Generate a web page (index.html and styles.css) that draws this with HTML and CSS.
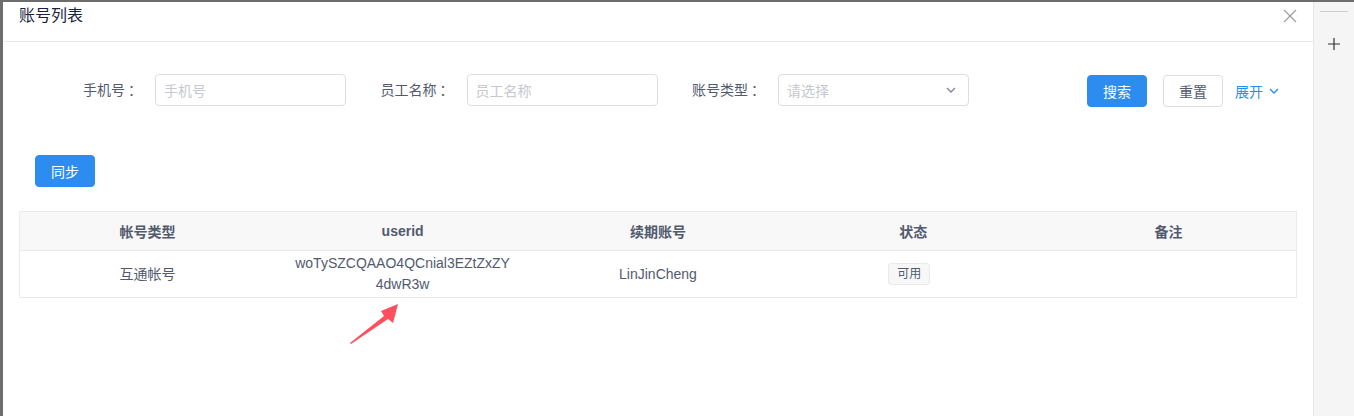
FILE: index.html
```html
<!DOCTYPE html>
<html lang="zh">
<head>
<meta charset="utf-8">
<title>账号列表</title>
<link rel="stylesheet" href="styles.css">
</head>
<body>
<div class="frame">
  <div class="modal">
    <div class="modal-header">
      <span class="modal-title">账号列表</span>
      <span class="close">
        <svg width="14" height="14" viewBox="0 0 14 14"><path d="M1 1 L13 13 M13 1 L1 13" stroke="#a0a0a0" stroke-width="1.2" fill="none"/></svg>
      </span>
    </div>
    <div class="modal-body">
      <div class="search-row">
        <div class="form-items">
          <div class="form-item">
            <label class="form-label">手机号<span class="colon">：</span></label>
            <div class="input"><span class="placeholder">手机号</span></div>
          </div>
          <div class="form-item">
            <label class="form-label">员工名称<span class="colon">：</span></label>
            <div class="input"><span class="placeholder">员工名称</span></div>
          </div>
          <div class="form-item">
            <label class="form-label">账号类型<span class="colon">：</span></label>
            <div class="input select"><span class="placeholder">请选择</span>
              <svg class="arrow-down" width="10" height="6" viewBox="0 0 10 6"><path d="M1 1 L5 5 L9 1" stroke="#808695" stroke-width="1.3" fill="none"/></svg>
            </div>
          </div>
        </div>
        <div class="actions">
          <button class="btn btn-primary">搜索</button>
          <button class="btn btn-default">重置</button>
          <a class="expand">展开
            <svg width="10" height="6" viewBox="0 0 10 6"><path d="M1 1 L5 5 L9 1" stroke="#2d8cf0" stroke-width="1.4" fill="none"/></svg>
          </a>
        </div>
      </div>
      <div class="toolbar">
        <button class="btn btn-primary">同步</button>
      </div>
      <table class="table">
        <thead>
          <tr><th>帐号类型</th><th>userid</th><th>续期账号</th><th>状态</th><th>备注</th></tr>
        </thead>
        <tbody>
          <tr>
            <td>互通帐号</td>
            <td class="wrap">woTySZCQAAO4QCnial3EZtZxZY4dwR3w</td>
            <td>LinJinCheng</td>
            <td><span class="tag">可用</span></td>
            <td></td>
          </tr>
        </tbody>
      </table>
    </div>
    <svg class="pointer" width="60" height="50" viewBox="0 0 60 50"><polygon points="3,42 37,15 34,10 51,3 46,22 41,18 4,43" fill="#ff4f5f"/></svg>
  </div>
  <div class="side">
    <div class="side-line"></div>
    <div class="side-plus">
      <svg width="12" height="12" viewBox="0 0 12 12"><path d="M6 0 V12 M0 6 H12" stroke="#333" stroke-width="1.2" fill="none"/></svg>
    </div>
  </div>
</div>
</body>
</html>
```
FILE: styles.css
```css
* { box-sizing: border-box; }
html, body { margin: 0; padding: 0; }
body {
  background: #6d6d6d;
  font-family: "Liberation Sans", "Noto Sans CJK SC", sans-serif;
  font-size: 14px;
  color: #515a6e;
  height: 416px;
  overflow: hidden;
}
.frame {
  display: flex;
  height: 416px;
  padding: 2px 0 0 3px;
}
.modal {
  position: relative;
  flex: 1;
  background: #fff;
  border-left: 1px solid #fff;
}
.modal-header {
  height: 40px;
  border-bottom: 1px solid #e8eaec;
  padding: 2px 16px 0 15px;
  display: flex;
  justify-content: space-between;
}
.modal-title {
  font-size: 16px;
  line-height: 24px;
  color: #17233d;
}
.close {
  margin-top: 5px;
  width: 14px;
  height: 14px;
  display: flex;
}
.modal-body {
  padding: 31px 16px 0 15px;
}
.search-row {
  display: flex;
  justify-content: space-between;
  align-items: center;
  padding: 0 15px 0 16px;
}
.form-items { display: flex; }
.form-item {
  display: flex;
  align-items: center;
  width: 311.5px;
}
.form-label {
  width: 120px;
  text-align: right;
  padding-right: 16px;
  color: #515a6e;
  line-height: 20px;
}
.colon {
  display: inline-block;
  width: 14px;
  text-align: center;
  padding-left: 3px;
}
.input {
  width: 191px;
  height: 32px;
  border: 1px solid #dcdee2;
  border-radius: 4px;
  padding: 0 8px;
  display: flex;
  align-items: center;
  justify-content: space-between;
}
.placeholder { color: #c5c8ce; font-size: 14px; }
.arrow-down { margin-right: 4px; }
.actions {
  display: flex;
  align-items: center;
  margin-top: 2px;
  padding-right: 3px;
}
.btn {
  width: 60px;
  height: 32px;
  border-radius: 4px;
  font-family: inherit;
  font-size: 14px;
  padding: 0;
  cursor: pointer;
}
.btn-primary {
  background: #2d8cf0;
  border: 1px solid #2d8cf0;
  color: #fff;
}
.btn-default {
  background: #fff;
  border: 1px solid #dcdee2;
  color: #515a6e;
  margin-left: 16px;
}
.expand {
  margin-left: 12px;
  color: #2d8cf0;
  display: flex;
  align-items: center;
  gap: 6px;
}
.toolbar {
  padding: 48px 16px 24px 16px;
  display: flex;
}
.table {
  width: 100%;
  table-layout: fixed;
  border-collapse: collapse;
  border: 1px solid #e8eaec;
}
.table th {
  height: 39px;
  background: #f8f8f9;
  font-weight: bold;
  color: #515a6e;
  border-bottom: 1px solid #e8eaec;
  padding: 0 18px;
  text-align: center;
}
.table td {
  height: 47px;
  padding: 0 18px;
  text-align: center;
  line-height: 21px;
  color: #515a6e;
}
.table td.wrap { word-break: break-all; }
.tag {
  display: inline-block;
  height: 22px;
  line-height: 20px;
  padding: 0 8px;
  margin-right: 8px;
  font-size: 12px;
  background: #f7f7f7;
  border: 1px solid #e8eaec;
  border-radius: 3px;
  color: #515a6e;
  vertical-align: middle;
}
.pointer {
  position: absolute;
  left: 343px;
  top: 299px;
}
.side {
  width: 41px;
  background: #f5f5f5;
  border-left: 1px solid #e6e6e6;
  display: flex;
  flex-direction: column;
  align-items: center;
}
.side-line {
  margin-top: 9px;
  width: 28px;
  height: 1px;
  background: #cfcfcf;
}
.side-plus {
  margin-top: 26px;
  display: flex;
}
```
